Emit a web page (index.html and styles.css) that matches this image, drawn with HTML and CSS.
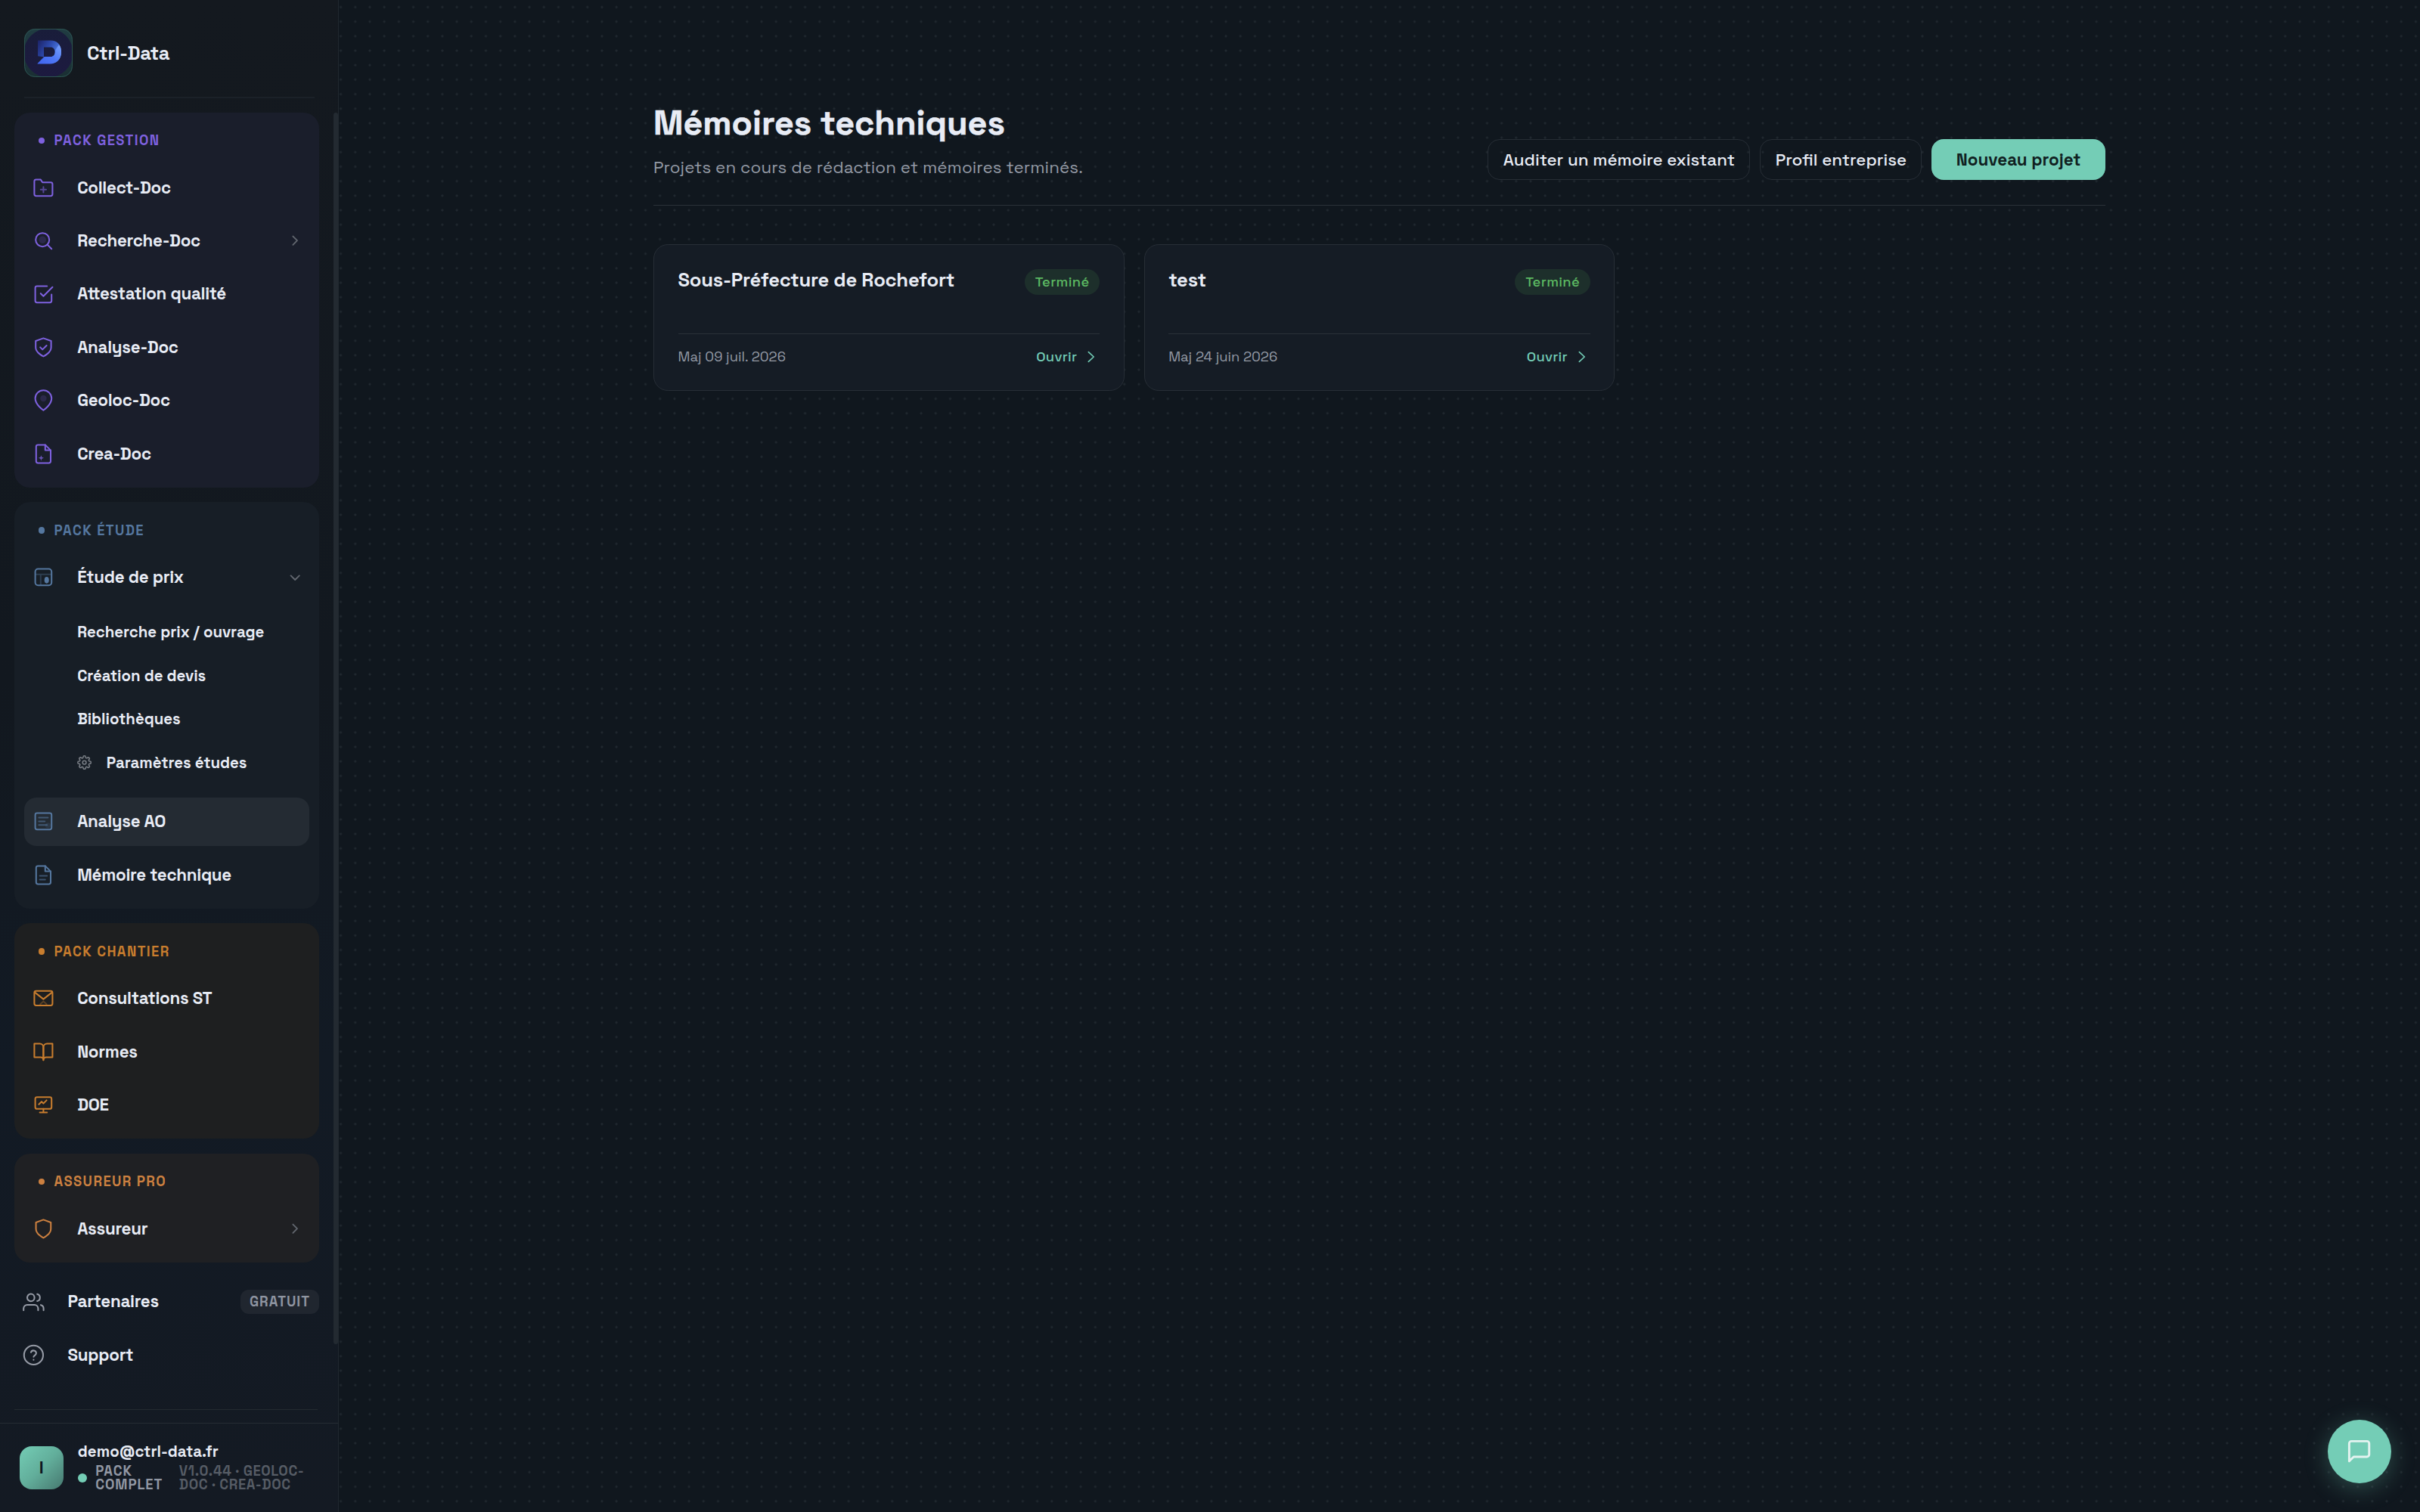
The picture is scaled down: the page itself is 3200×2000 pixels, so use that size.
FILE: index.html
```html
<!DOCTYPE html>
<html lang="fr">
<head>
<meta charset="utf-8">
<title>Ctrl-Data – Mémoires techniques</title>
<link rel="stylesheet" href="styles.css">
</head>
<body>
<div class="app">
  <aside class="sidebar">
    <header class="brand">
      <svg class="brand-logo" viewBox="0 0 64 64">
        <defs>
          <linearGradient id="lg-tile" x1="0" y1="0" x2="0" y2="1"><stop offset="0" stop-color="#203c42"/><stop offset="1" stop-color="#1a2f33"/></linearGradient>
          <linearGradient id="lg-disc" x1="0" y1="0" x2="0" y2="1"><stop offset="0" stop-color="#191d3a"/><stop offset="1" stop-color="#1d1a40"/></linearGradient>
          <linearGradient id="lg-d" x1="0" y1="0" x2="1" y2="0.55"><stop offset="0" stop-color="#1c2266"/><stop offset="0.5" stop-color="#2e4cb0"/><stop offset="1" stop-color="#5b8df5"/></linearGradient>
          <linearGradient id="lg-foot" x1="0" y1="1" x2="1" y2="0"><stop offset="0" stop-color="#3f63ee"/><stop offset="0.5" stop-color="#4f78f5"/><stop offset="1" stop-color="#7aa4fa"/></linearGradient>
          <clipPath id="cp-tile"><rect width="64" height="64" rx="14.4"/></clipPath>
        </defs>
        <rect width="64" height="64" rx="14.4" fill="url(#lg-tile)"/>
        <circle cx="32" cy="32" r="32.5" fill="url(#lg-disc)" clip-path="url(#cp-tile)"/>
        <path fill="url(#lg-d)" fill-rule="evenodd" d="M18 15.5h17c8.500 0 14 6 14 14.500v1c0 9-6 15-14.500 15H18zM26 24.500v12.500h9c3.500 0 5.500-2.500 5.500-6.300s-2-6.200-5.500-6.200z"/>
        <path fill="#1b1c3c" d="M16 36l9.800 1.200L16 47.500z"/>
        <path fill="url(#lg-foot)" d="M17.200 46.500L27 37h8.500c3.500 0 5.500-2.500 5.500-6.500 0-3 2.500-5.500 5-9.500 2 2.500 3 5.500 3 9.500 0 9.500-6 16-15 16z"/>
        <rect x="0.5" y="0.5" width="63" height="63" rx="14" fill="none" stroke="#2c5350"/>
      </svg>
      <span class="brand-name">Ctrl-Data</span>
    </header>

    <nav class="nav">
      <section class="pack pack-gestion">
        <h2 class="pack-title">PACK GESTION</h2>
        <a class="item"><svg class="icon" viewBox="0 0 24 24"><path d="M22 19a2 2 0 0 1-2 2H4a2 2 0 0 1-2-2V5a2 2 0 0 1 2-2h5l2 3h9a2 2 0 0 1 2 2z"/><path class="soft" d="M12 11v6M9 14h6"/></svg><span>Collect-Doc</span></a>
        <a class="item"><svg class="icon" viewBox="0 0 24 24"><circle class="tint" cx="11" cy="11" r="4"/><circle cx="11" cy="11" r="7.500"/><path d="M21 21l-4.700-4.700"/></svg><span>Recherche-Doc</span><svg class="chev" viewBox="0 0 24 24"><path d="M9 18l6-6-6-6"/></svg></a>
        <a class="item"><svg class="icon" viewBox="0 0 24 24"><path d="M9 11l3 3L22 4"/><path d="M21 12v7a2 2 0 0 1-2 2H5a2 2 0 0 1-2-2V5a2 2 0 0 1 2-2h11"/></svg><span>Attestation qualité</span></a>
        <a class="item"><svg class="icon" viewBox="0 0 24 24"><path d="M12 22s8.500-4 8.500-10V5L12 2 3.500 5v7c0 6 8.500 10 8.500 10z"/><path d="M8.500 12l2.500 2.500 4.500-4.500"/></svg><span>Analyse-Doc</span></a>
        <a class="item"><svg class="icon" viewBox="0 0 24 24"><path d="M21 10c0 7-9 13-9 13s-9-6-9-13a9 9 0 0 1 18 0z"/><circle class="tint" cx="12" cy="10" r="3.500"/></svg><span>Geoloc-Doc</span></a>
        <a class="item"><svg class="icon" viewBox="0 0 24 24"><path d="M14 2H6a2 2 0 0 0-2 2v16a2 2 0 0 0 2 2h12a2 2 0 0 0 2-2V8z"/><path d="M14 2v6h6"/><path class="spark" d="M9.500 13.500l.8 2.200 2.200.8-2.200.8-.8 2.200-.8-2.200-2.200-.8 2.200-.8z"/></svg><span>Crea-Doc</span></a>
      </section>

      <section class="pack pack-etude">
        <h2 class="pack-title">PACK ÉTUDE</h2>
        <a class="item"><svg class="icon" viewBox="0 0 24 24"><rect x="3" y="3" width="18" height="18" rx="3"/><path class="faint" d="M3.500 9h17M9 9v11.500"/><ellipse class="drop" cx="15.600" cy="15.300" rx="2.500" ry="3.600"/></svg><span>Étude de prix</span><svg class="chev" viewBox="0 0 24 24"><path d="M6 9l6 6 6-6"/></svg></a>
        <div class="subnav">
          <a class="sub">Recherche prix / ouvrage</a>
          <a class="sub">Création de devis</a>
          <a class="sub">Bibliothèques</a>
          <a class="sub"><svg class="gear" viewBox="0 0 24 24"><circle cx="12" cy="12" r="3"/><path d="M19.400 15a1.650 1.650 0 0 0 .33 1.820l.06.06a2 2 0 0 1-2.830 2.830l-.06-.06a1.650 1.650 0 0 0-1.820-.33 1.650 1.650 0 0 0-1 1.510V21a2 2 0 0 1-4 0v-.09A1.650 1.650 0 0 0 9 19.400a1.650 1.650 0 0 0-1.820.33l-.06.06a2 2 0 0 1-2.830-2.830l.06-.06a1.650 1.650 0 0 0 .33-1.820 1.650 1.650 0 0 0-1.510-1H3a2 2 0 0 1 0-4h.09A1.650 1.650 0 0 0 4.600 9a1.650 1.650 0 0 0-.33-1.820l-.06-.06a2 2 0 0 1 2.830-2.830l.06.06a1.650 1.650 0 0 0 1.820.33H9a1.650 1.650 0 0 0 1-1.510V3a2 2 0 0 1 4 0v.09a1.650 1.650 0 0 0 1 1.510 1.650 1.650 0 0 0 1.820-.33l.06-.06a2 2 0 0 1 2.830 2.830l-.06.06a1.650 1.650 0 0 0-.33 1.820V9a1.650 1.650 0 0 0 1.510 1H21a2 2 0 0 1 0 4h-.09a1.650 1.650 0 0 0-1.510 1z"/></svg>Paramètres études</a>
        </div>
        <a class="item active"><svg class="icon" viewBox="0 0 24 24"><rect x="3" y="3" width="18" height="18" rx="2"/><path class="soft" d="M7 8h10M7 12h6.500M7 16h9"/><circle class="tint" cx="17" cy="16.500" r="3"/></svg><span>Analyse AO</span></a>
        <a class="item"><svg class="icon" viewBox="0 0 24 24"><path d="M14 2H6a2 2 0 0 0-2 2v16a2 2 0 0 0 2 2h12a2 2 0 0 0 2-2V8z"/><path d="M14 2v6h6"/><path class="soft" d="M8 13h8M8 17h6"/></svg><span>Mémoire technique</span></a>
      </section>

      <section class="pack pack-chantier">
        <h2 class="pack-title">PACK CHANTIER</h2>
        <a class="item"><svg class="icon" viewBox="0 0 24 24"><rect x="2" y="4" width="20" height="16" rx="2"/><path d="M2.500 5.500L12 13l9.500-7.500"/><path class="faint" d="M8.500 18.500l3.500-3 3.500 3"/></svg><span>Consultations ST</span></a>
        <a class="item"><svg class="icon" viewBox="0 0 24 24"><path d="M2 3h6a4 4 0 0 1 4 4v14a3 3 0 0 0-3-3H2z"/><path d="M22 3h-6a4 4 0 0 0-4 4v14a3 3 0 0 1 3-3h7z"/></svg><span>Normes</span></a>
        <a class="item"><svg class="icon" viewBox="0 0 24 24"><rect x="3" y="3.500" width="18" height="13" rx="2"/><path d="M12 16.500v4M8 20.500h8M7 11.500l3-3 2 2 3.500-3.500"/></svg><span>DOE</span></a>
      </section>

      <section class="pack pack-assureur">
        <h2 class="pack-title">ASSUREUR PRO</h2>
        <a class="item"><svg class="icon" viewBox="0 0 24 24"><path d="M12 22s8.200-4 8.200-10V5L12 2 3.800 5v7c0 6 8.200 10 8.200 10z"/></svg><span>Assureur</span><svg class="chev" viewBox="0 0 24 24"><path d="M9 18l6-6-6-6"/></svg></a>
      </section>

      <div class="extras">
        <a class="item"><svg class="icon" viewBox="0 0 24 24"><path d="M17 21v-2a4 4 0 0 0-4-4H5a4 4 0 0 0-4 4v2"/><circle cx="9" cy="7" r="4"/><path d="M23 21v-2a4 4 0 0 0-3-3.870M16 3.130a4 4 0 0 1 0 7.750"/></svg><span>Partenaires</span><span class="tag">GRATUIT</span></a>
        <a class="item"><svg class="icon" viewBox="0 0 24 24"><circle cx="12" cy="12" r="10.500"/><path d="M9.090 9a3 3 0 0 1 5.830 1c0 2-2.920 2.600-2.920 4M12 17.200h.01"/></svg><span>Support</span></a>
      </div>
      <div class="nav-end"></div>
      <div class="scroll-thumb"></div>
    </nav>

    <footer class="account">
      <div class="avatar">I</div>
      <div class="account-text">
        <div class="email">demo@ctrl-data.fr</div>
        <div class="plan">
          <span class="dot"></span>
          <span class="plan-name">PACK<br>COMPLET</span>
          <span class="plan-version">V1.0.44 · GEOLOC-<br>DOC · CREA-DOC</span>
        </div>
      </div>
    </footer>
  </aside>

  <main class="main">
    <div class="content">
      <header class="page-head">
        <div>
          <h1>Mémoires techniques</h1>
          <p>Projets en cours de rédaction et mémoires terminés.</p>
        </div>
        <div class="actions">
          <button class="btn">Auditer un mémoire existant</button>
          <button class="btn">Profil entreprise</button>
          <button class="btn primary">Nouveau projet</button>
        </div>
      </header>
      <div class="grid">
        <article class="card">
          <div class="card-top"><h3>Sous-Préfecture de Rochefort</h3><span class="badge">Terminé</span></div>
          <div class="card-bottom"><span class="date">Maj 09 juil. 2026</span><a class="open">Ouvrir<svg viewBox="0 0 24 24"><path d="M8 19l7.500-7L8 5"/></svg></a></div>
        </article>
        <article class="card">
          <div class="card-top"><h3>test</h3><span class="badge">Terminé</span></div>
          <div class="card-bottom"><span class="date">Maj 24 juin 2026</span><a class="open">Ouvrir<svg viewBox="0 0 24 24"><path d="M8 19l7.500-7L8 5"/></svg></a></div>
        </article>
      </div>
    </div>
    <button class="chat"><svg viewBox="0 0 24 24"><path d="M21 15a2 2 0 0 1-2 2H7l-4 4V5a2 2 0 0 1 2-2h14a2 2 0 0 1 2 2z"/></svg></button>
  </main>
</div>
</body>
</html>
```
FILE: styles.css
```css
* { box-sizing: border-box; }

body {
  margin: 0;
  background: #10171e;
  color: #e8ecf5;
  font-family: "Space Grotesk", Inter, sans-serif;
}

h1, h2, h3, p { margin: 0; }
svg { display: block; fill: none; stroke: currentColor; stroke-linecap: round; stroke-linejoin: round; flex: none; }
button { border: 0; font: inherit; color: inherit; }

.app { display: flex; width: 3200px; height: 2000px; overflow: hidden; }

/* Sidebar */
.sidebar {
  display: flex;
  flex-direction: column;
  width: 448px;
  flex: none;
  background: linear-gradient(180deg, #14191f 0%, #12181f 45%, #121a24 70%, #141a23 100%);
  border-right: 1.6px solid #20282f;
}
.brand {
  display: flex;
  align-items: center;
  gap: 19px;
  height: 129.600px;
  margin: 0 31px 0 32px;
  padding-top: 12px;
  border-bottom: 2px solid #1b2128;
}
.brand-logo { width: 64px; height: 64px; stroke: none; }
.brand-name { font-size: 25.600px; font-weight: 700; letter-spacing: -0.512px; }

.nav { position: relative; flex: 1; padding: 19px 25px 0 19.200px; }
.scroll-thumb { position: absolute; top: 19px; right: 0; width: 6px; height: 1629px; border-radius: 3px; background: #232a31; }

.pack { margin-bottom: 19.200px; padding: 12.800px; border-radius: 20.800px; }
.pack-title {
  display: flex;
  align-items: center;
  gap: 12.400px;
  height: 49px;
  margin-bottom: 5.800px;
  padding-left: 18.600px;
  color: var(--accent);
  font-size: 18.400px;
  font-weight: 700;
  letter-spacing: 1.400px;
}
.pack-title::before { content: ""; width: 8.500px; height: 8.500px; border-radius: 50%; background: currentColor; }
.pack .icon { color: var(--accent); }

.pack-gestion { --accent: #7e61df; background: #1a1e2b; }
.pack-etude { --accent: #55779f; background: #171e26; }
.pack-chantier { --accent: #c87d2e; background: #1e1f20; }
.pack-assureur { --accent: #cc8040; background: #1f2023; }

.item {
  display: flex;
  align-items: center;
  height: 64px;
  padding: 0 8px 0 11px;
  border-radius: 16px;
  font-size: 22.400px;
  font-weight: 700;
  letter-spacing: -0.300px;
}
.item + .item { margin-top: 6.400px; }
.item.active { background: #242b33; }
.icon { width: 28.800px; height: 28.800px; margin-right: 30.400px; stroke-width: 1.700; }
.chev { width: 22.400px; height: 22.400px; margin-left: auto; color: #62676f; stroke-width: 2; }
.soft { opacity: 0.6; }
.faint { opacity: 0.35; }
.tint { opacity: 0.18; fill: currentColor; stroke: none; }
.drop { fill: currentColor; stroke: none; }
.spark { opacity: 0.8; fill: currentColor; stroke: none; }

.subnav { display: flex; flex-direction: column; gap: 6.400px; padding: 14.800px 0 20.400px; }
.sub {
  display: flex;
  align-items: center;
  height: 51.200px;
  padding-left: 70.200px;
  font-size: 20.480px;
  font-weight: 600;
  letter-spacing: -0.050px;
}
.gear { width: 19.200px; height: 19.200px; margin-right: 19.500px; color: #777c83; stroke-width: 2; }

.extras { padding-top: 0.800px; }
.extras .item { padding: 0; }
.extras .icon { margin-left: 10.800px; margin-right: 30.800px; color: #979ca7; }
.tag {
  margin-left: auto;
  padding: 0 12px;
  border-radius: 11px;
  background: #20262f;
  color: #8f95a1;
  font-size: 18.400px;
  font-weight: 700;
  line-height: 32px;
  letter-spacing: 1px;
}
.nav-end { margin: 39.500px 2px 0 0; border-top: 1.600px solid #232a31; }

.account {
  display: flex;
  align-items: center;
  gap: 19.200px;
  height: 118px;
  padding: 0 24px 0 26px;
  border-top: 1.600px solid #252c33;
}
.avatar {
  display: flex;
  align-items: center;
  justify-content: center;
  width: 57.600px;
  height: 57.600px;
  border-radius: 16px;
  background: linear-gradient(135deg, #74cdb5 0%, #62ae9b 50%, #46786f 100%);
  color: #10171e;
  font-size: 22.400px;
  font-weight: 700;
}
.account-text { margin-top: -3px; }
.email { font-size: 20.480px; font-weight: 600; line-height: 26px; }
.plan { display: flex; align-items: center; margin-top: 4.500px; font-size: 18.400px; font-weight: 700; line-height: 18px; letter-spacing: 0.600px; }
.dot { width: 12px; height: 12px; margin-right: 11.500px; border-radius: 50%; background: #74cdb5; }
.plan-name { width: 110.500px; color: #9197a3; letter-spacing: 0.900px; }
.plan-version { color: #565c65; }

/* Main area */
.main {
  position: relative;
  flex: 1;
  background-color: #10171e;
  background-image: radial-gradient(circle, #222a31 0, #1f272e 1.100px, rgba(29, 37, 44, 0) 2px);
  background-size: 19.190px 19.190px;
  background-position: -7px -0.200px;
}
.content { width: 1920px; margin: 0 auto; padding-top: 126px; }
.page-head {
  display: flex;
  justify-content: space-between;
  align-items: flex-end;
  height: 146px;
  padding-bottom: 32px;
  border-bottom: 1.600px solid #2a3138;
}
h1 { font-size: 44.800px; font-weight: 700; line-height: 58px; -webkit-text-stroke: 0.500px currentColor; }
.page-head p { margin-top: 13px; color: #949aa5; font-size: 22.400px; line-height: 34px; letter-spacing: 0.070px; }
.actions { display: flex; gap: 12.800px; margin-bottom: 0.800px; }
.btn {
  height: 54.400px;
  padding: 0 19.500px;
  border: 1.600px solid #262d35;
  border-radius: 16px;
  background: none;
  font-size: 22.400px;
  font-weight: 500;
}
.btn.primary { padding: 0 32.500px; border: 0; background: #74cdb6; color: #10201f; font-weight: 600; }

.grid { display: grid; grid-template-columns: repeat(3, 1fr); gap: 25.600px; padding-top: 51px; }
.card {
  height: 194px;
  padding: 31px 31.600px 0 31.600px;
  border: 1.600px solid #272e36;
  border-radius: 19.200px;
  background: #151c25;
}
.card-top { display: flex; justify-content: space-between; align-items: flex-start; height: 86px; }
h3 { font-size: 25.600px; font-weight: 600; line-height: 31px; letter-spacing: -0.230px; }
.badge {
  margin-top: 1px;
  padding: 0 13.800px;
  border-radius: 17px;
  background: #1d2f2b;
  color: #5cba62;
  font-size: 18.400px;
  font-weight: 500;
  line-height: 34px;
  letter-spacing: 0.350px;
}
.card-bottom { display: flex; justify-content: space-between; align-items: center; padding-top: 17px; border-top: 1.600px solid #2a3138; font-size: 18.400px; line-height: 25px; }
.date { color: #949aa5; }
.open { display: flex; align-items: center; color: #72cbb5; font-weight: 500; letter-spacing: 0.250px; }
.open svg { width: 22px; height: 22px; margin-left: 8px; stroke-width: 1.800; }

.chat {
  position: absolute;
  right: 38px;
  bottom: 38px;
  display: flex;
  align-items: center;
  justify-content: center;
  width: 84px;
  height: 84px;
  padding: 0;
  border-radius: 50%;
  background: #74cdb6;
  color: #e4f3f0;
  box-shadow: 0 6px 32px rgba(116, 205, 182, 0.3);
}
.chat svg { width: 35.200px; height: 35.200px; stroke-width: 2; }
```
